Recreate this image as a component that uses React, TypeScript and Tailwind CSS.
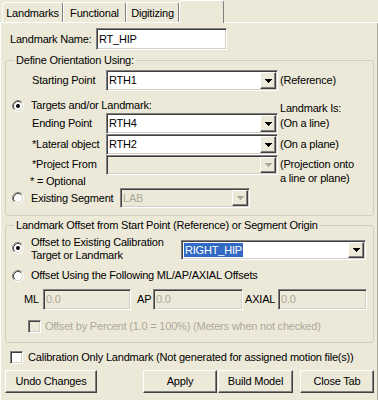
import React from "react";

const sunken =
  "border border-t-[#808080] border-l-[#808080] border-b-white border-r-white shadow-[inset_1px_1px_0_#404040,inset_-1px_-1px_0_#d4d0c8]";
const raised =
  "border border-t-white border-l-white border-b-[#404040] border-r-[#404040] shadow-[inset_-1px_-1px_0_#808080]";

function Arrow({ disabled }: { disabled?: boolean }) {
  return (
    <svg width="7" height="4" viewBox="0 0 7 4" shapeRendering="crispEdges">
      <path
        d="M0 0h7v1H0zM1 1h5v1H1zM2 2h3v1H2zM3 3h1v1H3z"
        fill={disabled ? "#aca899" : "#000"}
      />
    </svg>
  );
}

function Combo({
  value,
  className,
  disabled,
  selected,
}: {
  value?: string;
  className: string;
  disabled?: boolean;
  selected?: boolean;
}) {
  return (
    <div
      className={`${sunken} ${className} flex p-[1px] ${
        disabled ? "bg-[#ece9d8] text-[#aca899]" : "bg-white"
      }`}
    >
      <div className="flex flex-1 items-center pl-[1px]">
        {selected ? (
          <span className="flex h-[14px] items-center bg-[#316ac5] px-[1px] text-white">
            {value}
          </span>
        ) : (
          value
        )}
      </div>
      <div
        className={`${raised} flex w-[16px] items-center justify-center bg-[#ece9d8]`}
      >
        <Arrow disabled={disabled} />
      </div>
    </div>
  );
}

function Field({ value, className }: { value: string; className: string }) {
  return (
    <div
      className={`${sunken} ${className} flex items-center bg-[#ece9d8] pl-[2px] text-[#aca899]`}
    >
      {value}
    </div>
  );
}

function Radio({ checked }: { checked?: boolean }) {
  return (
    <svg width="12" height="12" viewBox="0 0 12 12" className="shrink-0">
      <circle cx="6" cy="6" r="5" fill="#fff" />
      <path d="M9.89 2.11A5.5 5.5 0 0 0 2.11 9.89" stroke="#808080" fill="none" />
      <path d="M2.11 9.89A5.5 5.5 0 0 0 9.89 2.11" stroke="#fff" fill="none" />
      <path d="M9.18 2.82A4.5 4.5 0 0 0 2.82 9.18" stroke="#404040" fill="none" />
      <path d="M2.82 9.18A4.5 4.5 0 0 0 9.18 2.82" stroke="#d4d0c8" fill="none" />
      {checked && <circle cx="6" cy="6" r="2" fill="#000" />}
    </svg>
  );
}

function Check({ disabled }: { disabled?: boolean }) {
  return (
    <div
      className={`${sunken} h-[13px] w-[13px] shrink-0 ${
        disabled ? "bg-[#ece9d8]" : "bg-white"
      }`}
    />
  );
}

function Tab({ label, className }: { label: string; className: string }) {
  return (
    <div
      className={`${className} flex h-[20px] items-center justify-center rounded-t-[3px] border-l border-r border-t border-l-white border-r-[#808080] border-t-white pt-[2px]`}
    >
      {label}
    </div>
  );
}

function Button({ label, className }: { label: string; className: string }) {
  return (
    <div
      className={`${raised} ${className} flex h-[23px] items-center justify-center bg-[#ece9d8]`}
    >
      {label}
    </div>
  );
}

export default function App() {
  return (
    <div className="h-[400px] w-[378px] overflow-hidden bg-[#ece9d8] font-['Liberation_Sans',Arial,sans-serif] text-[11px] leading-[13px] tracking-[-0.2px] text-black">
      {/* Tabs */}
      <div className="flex h-[22px] items-end pl-[2px]">
        <Tab label="Landmarks" className="w-[61px]" />
        <Tab label="Functional" className="w-[63px]" />
        <Tab label="Digitizing" className="w-[53px]" />
        <div className="relative z-10 -mb-px h-[23px] w-[45px] rounded-t-[3px] border-l border-r border-t border-l-white border-r-[#808080] border-t-white bg-[#ece9d8]" />
      </div>

      {/* Panel */}
      <div className="h-[378px] pt-[6px] shadow-[inset_1px_1px_0_#fff,inset_-1px_0_0_#aca899,inset_-2px_0_0_#ece9d8]">
        <div className="flex h-[22px] items-center">
          <span className="w-[96px] pl-[10px]">Landmark Name:</span>
          <div className={`${sunken} flex h-[22px] w-[131px] items-center bg-white pl-[2px]`}>
            RT_HIP
          </div>
        </div>

        {/* Define Orientation Using */}
        <fieldset className="ml-[5px] mt-[4px] w-[369px] rounded-[3px] border border-[#d0d0bf] pb-[7px]">
          <legend className="ml-[8px] px-[2px] leading-[12px]">Define Orientation Using:</legend>

          <div className="mt-[4px] flex h-[21px] items-center">
            <span className="w-[100px] pl-[26px]">Starting Point</span>
            <Combo value="RTH1" className="h-[21px] w-[172px]" />
            <span className="ml-[2px]">(Reference)</span>
          </div>

          <div className="flex h-[22px] items-start">
            <div className="mt-[8px] flex w-[274px] items-center pl-[6px]">
              <Radio checked />
              <span className="ml-[7px]">Targets and/or Landmark:</span>
            </div>
            <span className="mt-[11px]">Landmark Is:</span>
          </div>

          <div className="flex h-[21px] items-center">
            <span className="w-[100px] pl-[26px]">Ending Point</span>
            <Combo value="RTH4" className="h-[21px] w-[172px]" />
            <span className="ml-[2px]">(On a line)</span>
          </div>

          <div className="flex h-[21px] items-center">
            <span className="w-[100px] pl-[26px]">*Lateral object</span>
            <Combo value="RTH2" className="h-[21px] w-[172px]" />
            <span className="ml-[2px]">(On a plane)</span>
          </div>

          <div className="flex h-[20px] items-start">
            <span className="mt-[3px] w-[100px] pl-[26px]">*Project From</span>
            <Combo disabled className="h-[20px] w-[172px]" />
            <span className="ml-[2px] mt-[2px] leading-[14px]">
              (Projection onto
              <br />a line or plane)
            </span>
          </div>

          <div className="flex h-[12px] items-center pl-[24px]">* = Optional</div>

          <div className="mt-[1px] flex h-[20px] items-center">
            <div className="flex w-[114px] items-center pl-[6px]">
              <Radio />
              <span className="ml-[7px]">Existing Segment</span>
            </div>
            <Combo disabled value="LAB" className="h-[20px] w-[130px]" />
          </div>
        </fieldset>

        {/* Landmark Offset */}
        <fieldset className="ml-[5px] mt-[3px] w-[369px] rounded-[3px] border border-[#d0d0bf] pb-[9px]">
          <legend className="ml-[8px] px-[2px] leading-[12px]">
            Landmark Offset from Start Point (Reference) or Segment Origin
          </legend>

          <div className="mt-[5px] flex items-start">
            <div className="flex w-[175px] items-start pl-[6px]">
              <div className="mt-[6px]">
                <Radio checked />
              </div>
              <span className="ml-[7px]">
                Offset to Existing Calibration
                <br />
                Target or Landmark
              </span>
            </div>
            <Combo selected value="RIGHT_HIP" className="mt-[4px] h-[20px] w-[185px]" />
          </div>

          <div className="mt-[7px] flex h-[13px] items-center pl-[6px]">
            <Radio />
            <span className="ml-[7px]">Offset Using the Following ML/AP/AXIAL Offsets</span>
          </div>

          <div className="mt-[7px] flex h-[21px] items-center">
            <span className="ml-[18px] w-[19px]">ML</span>
            <Field value="0.0" className="h-[21px] w-[88px]" />
            <span className="ml-[6px] w-[16px]">AP</span>
            <Field value="0.0" className="h-[21px] w-[90px]" />
            <span className="ml-[2px] w-[33px]">AXIAL</span>
            <Field value="0.0" className="h-[21px] w-[89px]" />
          </div>

          <div className="mt-[10px] flex h-[13px] items-center pl-[22px] text-[#aca899]">
            <Check disabled />
            <span className="ml-[4px]">
              Offset by Percent (1.0 = 100%) (Meters when not checked)
            </span>
          </div>
        </fieldset>

        <div className="mt-[8px] flex h-[13px] items-center pl-[10px]">
          <Check />
          <span className="ml-[5px]">
            Calibration Only Landmark (Not generated for assigned motion file(s))
          </span>
        </div>

        <div className="mt-[6px] flex">
          <Button label="Undo Changes" className="ml-[5px] w-[92px]" />
          <Button label="Apply" className="ml-[46px] w-[74px]" />
          <Button label="Build Model" className="ml-[1px] w-[75px]" />
          <Button label="Close Tab" className="ml-[7px] w-[74px]" />
        </div>
      </div>
    </div>
  );
}
